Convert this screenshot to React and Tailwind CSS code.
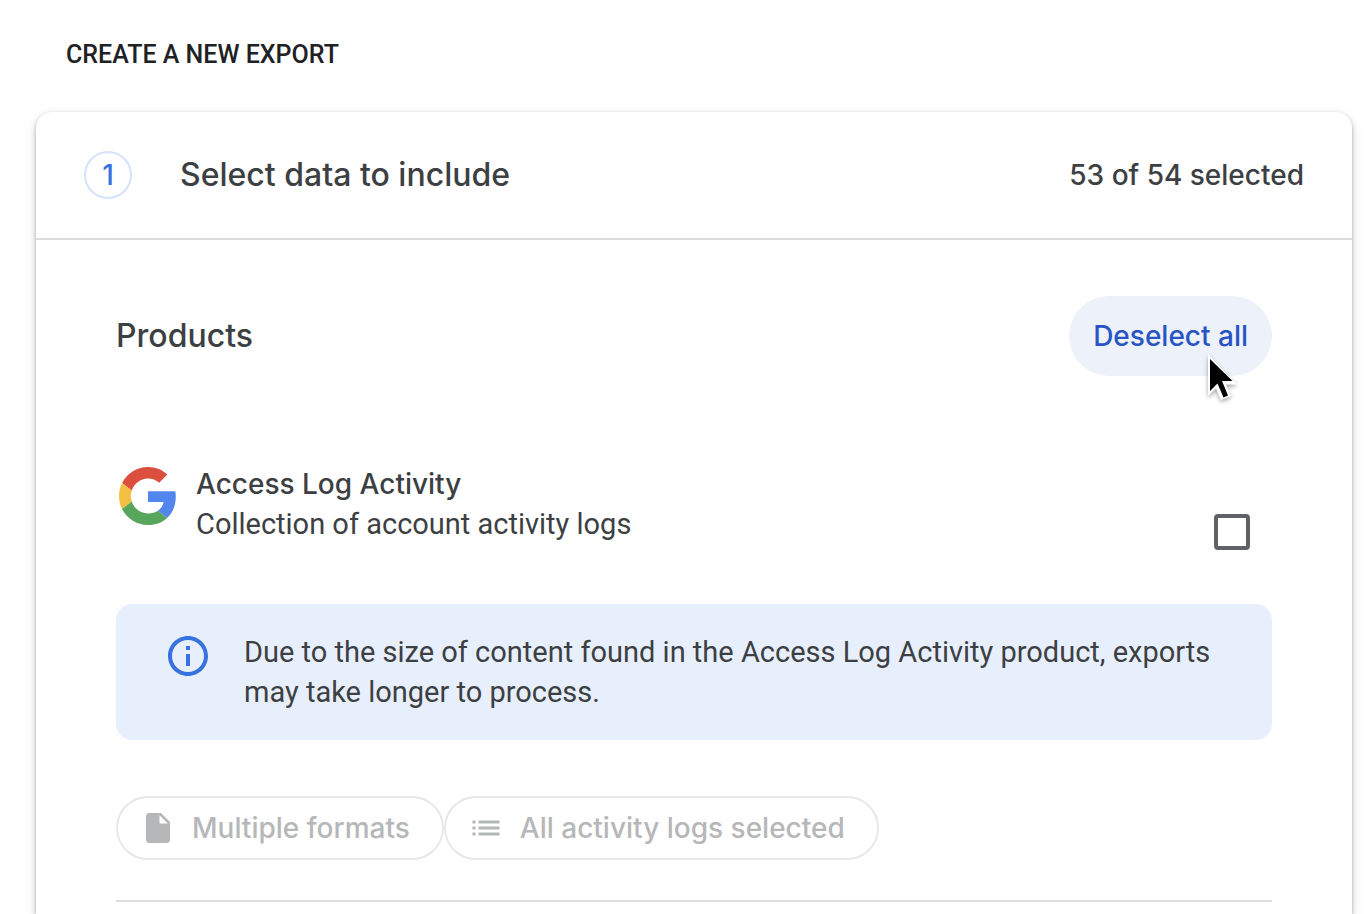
import React from "react";

const display = "font-['Google_Sans','Inter',sans-serif]";

function GoogleLogo() {
  return (
    <svg viewBox="0 0 48 48" className="size-16 shrink-0 p-[3px]" aria-hidden="true">
      <path fill="#db4f3f" d="M24 9.5c3.54 0 6.71 1.22 9.21 3.6l6.85-6.85C35.9 2.38 30.47 0 24 0 14.62 0 6.51 5.38 2.56 13.22l7.98 6.19C12.43 13.72 17.74 9.5 24 9.5z" />
      <path fill="#5285ee" d="M46.98 24.55c0-1.57-.15-3.09-.38-4.55H24v9.02h12.94c-.58 2.96-2.26 5.48-4.78 7.18l7.73 6c4.51-4.18 7.09-10.36 7.09-17.65z" />
      <path fill="#f3bf42" d="M10.53 28.59c-.48-1.45-.76-2.99-.76-4.59s.27-3.14.76-4.59l-7.98-6.19C.92 16.46 0 20.12 0 24c0 3.88.92 7.54 2.56 10.78l7.97-6.19z" />
      <path fill="#58a55c" d="M24 48c6.48 0 11.93-2.13 15.89-5.81l-7.73-6c-2.15 1.45-4.92 2.3-8.16 2.3-6.26 0-11.57-4.22-13.47-9.91l-7.98 6.19C6.51 42.62 14.62 48 24 48z" />
    </svg>
  );
}

function InfoIcon() {
  return (
    <svg viewBox="0 0 24 24" className="size-12 shrink-0 fill-[#3871e0]" aria-hidden="true">
      <path d="M11 7h2v2h-2zm0 4h2v6h-2zm1-9C6.48 2 2 6.48 2 12s4.48 10 10 10 10-4.48 10-10S17.52 2 12 2zm0 18c-4.41 0-8-3.59-8-8s3.59-8 8-8 8 3.59 8 8-3.59 8-8 8z" />
    </svg>
  );
}

function FileIcon() {
  return (
    <svg viewBox="0 0 24 24" className="size-9 shrink-0 fill-current" aria-hidden="true">
      <path d="M6 2c-1.100 0-2 .9-2 2v16c0 1.100.9 2 2 2h12c1.100 0 2-.9 2-2V8l-6-6H6zm7 7V3.500L18.500 9H13z" />
    </svg>
  );
}

function ListIcon() {
  return (
    <svg viewBox="0 0 24 24" className="size-9 shrink-0 fill-current" aria-hidden="true">
      <path d="M3 13h2v-2H3v2zm0 4h2v-2H3v2zm0-8h2V7H3v2zm4 4h14v-2H7v2zm0 4h14v-2H7v2zM7 7v2h14V7H7z" />
    </svg>
  );
}

function Pointer() {
  return (
    <svg viewBox="0 0 34 50" className="pointer-events-none absolute top-14 right-8 h-[50px] w-[34px] drop-shadow-[0_2px_2px_rgba(0,0,0,0.35)]" aria-hidden="true">
      <path d="M2 2v42l8-7.500 5 11.500 10-4-5-11.500H31z" fill="#fff" />
      <path d="M4 7v32l7.500-7.500 6 14 4.500-2-6-14.500h10.500z" fill="#000" />
    </svg>
  );
}

function Chip({ icon, children }) {
  return (
    <button type="button" disabled className={`${display} flex h-16 items-center gap-4 rounded-full border-2 border-[#e8e8e8] pr-8 pl-[22px] text-[28px] leading-10 font-medium text-[#b5b7b8]`}>
      {icon}
      {children}
    </button>
  );
}

export default function App() {
  return (
    <main className="flex min-h-screen flex-col bg-white pr-[18px] pl-9 font-['Roboto',sans-serif] text-[#3c4043]">
      <h1 className="pt-[37px] pb-[39px] pl-[30px] text-[25px] leading-9 font-medium text-[#202124] uppercase">Create a new export</h1>
      <section className="flex-1 rounded-t-2xl shadow-[0_2px_4px_rgba(60,64,67,0.4),0_4px_12px_rgba(60,64,67,0.15)]">
        <header className="flex items-center border-b-2 border-[#dadce0] px-12 py-[39px]">
          <span className={`${display} flex size-12 items-center justify-center rounded-full border-2 border-[#d5e2fb] text-[28px] leading-10 font-medium text-[#3871e0]`}>1</span>
          <h2 className={`${display} ml-12 flex-1 text-[32px] leading-10 font-medium`}>Select data to include</h2>
          <p className={`${display} text-[28px] leading-10 font-medium`}>53 of 54 selected</p>
        </header>
        <div className="px-20 pt-14">
          <div className="flex items-center justify-between">
            <h3 className={`${display} text-[32px] leading-10 font-medium`}>Products</h3>
            <div className="relative">
              <button type="button" className={`${display} h-20 rounded-full bg-[#ecf1fa] px-6 text-[28px] font-medium text-[#2854c5]`}>Deselect all</button>
              <Pointer />
            </div>
          </div>
          <div className="mt-[88px] flex gap-4">
            <GoogleLogo />
            <label htmlFor="access-log" className="flex-1 leading-10">
              <span className={`${display} block text-[28px] font-medium`}>Access Log Activity</span>
              <span className="block text-[29px]">Collection of account activity logs</span>
            </label>
            <input id="access-log" type="checkbox" className="mt-[50px] mr-[22px] size-9 appearance-none rounded-sm border-4 border-[#5f6368] checked:bg-[#5f6368]" />
          </div>
          <div className="mt-[54px] flex gap-8 rounded-2xl bg-[#e8effc] px-12 py-7">
            <InfoIcon />
            <p className="text-[29px] leading-10">Due to the size of content found in the Access Log Activity product, exports may take longer to process.</p>
          </div>
          <div className="mt-14 flex">
            <Chip icon={<FileIcon />}>Multiple formats</Chip>
            <Chip icon={<ListIcon />}>All activity logs selected</Chip>
          </div>
          <hr className="mt-10 border-t-2 border-[#dadce0]" />
        </div>
      </section>
    </main>
  );
}
